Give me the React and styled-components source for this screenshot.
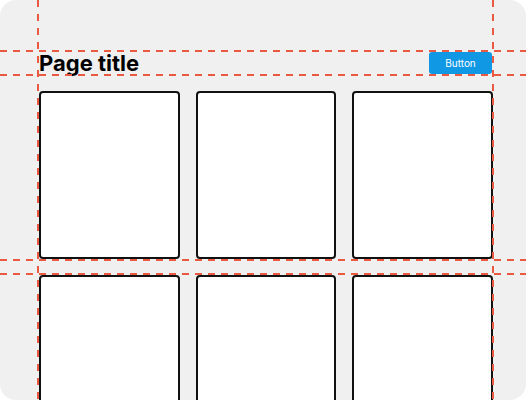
import React from "react";
import styled, { createGlobalStyle } from "styled-components";

const GlobalStyle = createGlobalStyle`
  html, body {
    margin: 0;
    padding: 0;
    background: #ffffff;
  }
  body {
    font-family: Inter, "Noto Sans", sans-serif;
  }
`;

const guideColor = "#ea5a43";

// grey canvas with rounded corners, content placed by padding
const Frame = styled.div`
  position: relative;
  width: 526px;
  height: 400px;
  box-sizing: border-box;
  background: #f0f0f0;
  border-radius: 16px;
  overflow: hidden;
  padding: 51px 33px 0 39px;
`;

const Header = styled.div`
  display: flex;
  align-items: center;
  justify-content: space-between;
  height: 24px;
  margin-bottom: 16px;
`;

const Title = styled.h1`
  margin: 0;
  font-size: 22px;
  line-height: 24px;
  font-weight: 700;
  color: #000;
`;

const Button = styled.button`
  width: 63px;
  height: 22px;
  margin-right: 1px;
  border: none;
  border-radius: 3px;
  background: #1098e4;
  color: #ffffff;
  font-family: Inter, sans-serif;
  font-size: 10px;
  padding: 0;
`;

const Grid = styled.div`
  display: grid;
  grid-template-columns: repeat(3, 1fr);
  grid-auto-rows: 168px;
  gap: 16px;
`;

const Card = styled.div`
  box-sizing: border-box;
  background: #ffffff;
  border: 2px solid #111;
  border-radius: 4px;
`;

// dashed layout guides drawn over the canvas
const HGuide = styled.div`
  position: absolute;
  left: 0;
  right: 0;
  top: ${(p) => p.y}px;
  height: 2px;
  background: repeating-linear-gradient(
    to right,
    ${guideColor} 0 7px,
    transparent 7px 13px
  );
`;

const VGuide = styled.div`
  position: absolute;
  top: 0;
  bottom: 0;
  left: ${(p) => p.x}px;
  width: 2px;
  background: repeating-linear-gradient(
    to bottom,
    ${guideColor} 0 7px,
    transparent 7px 14px
  );
`;

const App = () => {
  const cards = [1, 2, 3, 4, 5, 6];
  return (
    <>
      <GlobalStyle />
      <Frame>
        <Header>
          <Title>Page title</Title>
          <Button>Button</Button>
        </Header>
        <Grid>
          {cards.map((id) => (
            <Card key={id} />
          ))}
        </Grid>
        <HGuide y={50} />
        <HGuide y={74} />
        <HGuide y={259} />
        <HGuide y={273} />
        <VGuide x={37} />
        <VGuide x={492} />
      </Frame>
    </>
  );
};

export default App;
